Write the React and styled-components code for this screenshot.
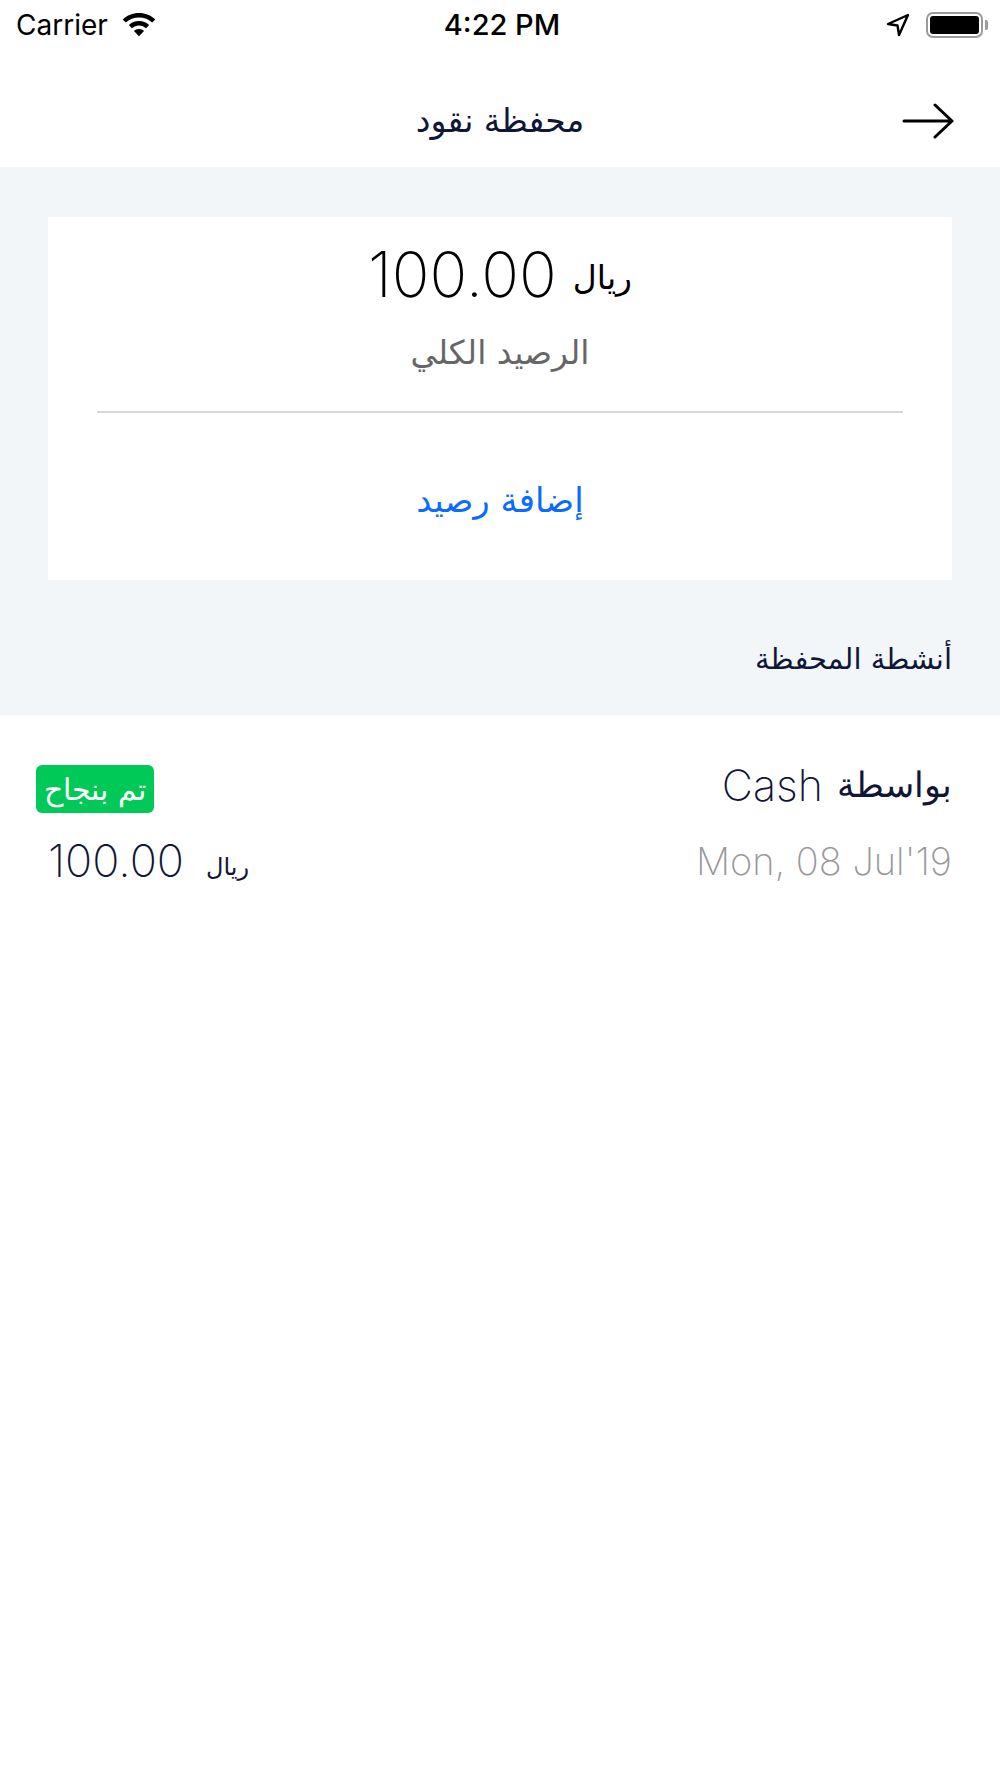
import React from "react";
import styled, { createGlobalStyle } from "styled-components";

const GlobalStyle = createGlobalStyle`
  html, body {
    margin: 0;
    padding: 0;
    background: #fff;
    font-family: "Inter", "DejaVu Sans", sans-serif;
  }
`;

const Page = styled.div`
  width: 1000px;
  height: 1778px;
  background: #fff;
  display: flex;
  flex-direction: column;
`;

const StatusBar = styled.div`
  height: 48px;
  padding: 2px 12px 0 16px;
  box-sizing: border-box;
  display: grid;
  grid-template-columns: 1fr auto 1fr;
  align-items: center;
  color: #000;
`;

const StatusLeft = styled.div`
  display: flex;
  align-items: center;
  gap: 14px;
  font-size: 28px;
  font-weight: 400;
  line-height: 46px;
`;

const StatusTime = styled.div`
  font-size: 29px;
  font-weight: 500;
  line-height: 46px;
`;

const StatusRight = styled.div`
  display: flex;
  align-items: center;
  justify-content: flex-end;
  gap: 16px;
`;

const Battery = styled.div`
  position: relative;
  width: 57px;
  height: 26px;
  box-sizing: border-box;
  border: 2px solid #9b9b9b;
  border-radius: 7px;
  padding: 2px;
  margin-right: 5px;

  &::before {
    content: "";
    display: block;
    height: 100%;
    background: #000;
    border-radius: 3px;
  }

  &::after {
    content: "";
    position: absolute;
    right: -7px;
    top: 6px;
    width: 3px;
    height: 10px;
    background: #9b9b9b;
    border-radius: 0 2px 2px 0;
  }
`;

const NavBar = styled.div`
  position: relative;
  height: 119px;
  box-sizing: border-box;
  padding-top: 26px;
  display: flex;
  align-items: center;
  justify-content: center;
`;

const NavTitle = styled.h1`
  margin: 0;
  font-family: "DejaVu Sans", sans-serif;
  font-size: 33px;
  font-weight: 400;
  line-height: 40px;
  color: #0f1638;
`;

const BackButton = styled.div`
  position: absolute;
  right: 46px;
  top: 55px;
  display: flex;
`;

const Content = styled.div`
  background: #f3f6f9;
  padding: 50px 48px 0;
`;

const BalanceCard = styled.div`
  height: 363px;
  box-sizing: border-box;
  background: #fff;
  padding: 0 49px;
  display: flex;
  flex-direction: column;
  align-items: center;
`;

const BalanceRow = styled.div`
  margin-top: 27px;
  display: flex;
  align-items: center;
  gap: 16px;
  height: 60px;
`;

const Amount = styled.span`
  font-size: ${(p) => p.$size}px;
  font-weight: 250;
  color: ${(p) => p.$color};
`;

const Currency = styled.span`
  font-family: "DejaVu Sans", sans-serif;
  font-size: ${(p) => p.$size}px;
  color: ${(p) => p.$color};
  position: relative;
  top: ${(p) => p.$drop}px;
`;

const BalanceLabel = styled.div`
  margin-top: 29px;
  font-family: "DejaVu Sans", sans-serif;
  font-size: 33px;
  line-height: 40px;
  color: #666;
`;

const Divider = styled.div`
  align-self: stretch;
  height: 2px;
  margin-top: 38px;
  background: #d8d8d8;
`;

const AddBalance = styled.div`
  margin-top: 67px;
  font-family: "DejaVu Sans", sans-serif;
  font-size: 34px;
  line-height: 40px;
  color: #0a6cff;
`;

const SectionTitle = styled.div`
  height: 135px;
  box-sizing: border-box;
  padding-top: 62px;
  text-align: right;
  font-family: "DejaVu Sans", sans-serif;
  font-size: 29px;
  color: #0f1638;
`;

const Activity = styled.div`
  padding: 50px 48px 0 36px;
  display: flex;
  flex-direction: column;
  gap: 20px;
`;

const ActivityRow = styled.div`
  display: flex;
  align-items: center;
  justify-content: space-between;
  padding-left: ${(p) => p.$inset || 0}px;
`;

const StatusBadge = styled.div`
  width: 118px;
  height: 48px;
  background: #00c957;
  border-radius: 6px;
  color: #fff;
  display: flex;
  align-items: center;
  justify-content: center;
  font-family: "DejaVu Sans", sans-serif;
  font-size: 30px;
  font-weight: 300;
  white-space: nowrap;
`;

const Method = styled.div`
  display: flex;
  align-items: center;
  gap: 14px;
  margin-top: -8px;
  font-size: 43px;
  font-weight: 250;
  line-height: 48px;
  color: #0f1638;
`;

const MethodArabic = styled.span`
  font-family: "DejaVu Sans", sans-serif;
  font-size: 35px;
`;

const PriceGroup = styled.div`
  display: flex;
  align-items: center;
  gap: 22px;
`;

const DateText = styled.div`
  font-size: 38px;
  font-weight: 250;
  color: #989898;
`;

function App() {
  return (
    <Page>
      <GlobalStyle />
      <StatusBar>
        <StatusLeft>
          Carrier
          <svg width="34" height="24" viewBox="0 0 34 24" fill="#000">
            <path d="M17 0C10.7 0 5 2.4.8 6.4l3 3.2C7.2 6.3 11.9 4.4 17 4.4s9.800 1.900 13.200 5.200l3-3.200C29 2.400 23.300 0 17 0z" />
            <path d="M17 8c-3.900 0-7.400 1.500-10.100 4l3 3.200c1.900-1.700 4.400-2.800 7.100-2.800s5.200 1.100 7.100 2.800l3-3.200C24.400 9.500 20.900 8 17 8z" />
            <path d="M17 16c-1.900 0-3.700.7-5 1.900l5 5.300 5-5.300c-1.300-1.200-3.100-1.900-5-1.900z" />
          </svg>
        </StatusLeft>
        <StatusTime>4:22 PM</StatusTime>
        <StatusRight>
          <svg width="24" height="24" viewBox="0 0 24 24" fill="none" stroke="#000" strokeWidth="2.400" strokeLinejoin="round">
            <path d="M22 2 2 11l9.500 1.500L13 22z" />
          </svg>
          <Battery />
        </StatusRight>
      </StatusBar>
      <NavBar>
        <NavTitle>محفظة نقود</NavTitle>
        <BackButton>
          <svg width="52" height="36" viewBox="0 0 52 36" fill="none" stroke="#000" strokeWidth="3" strokeLinecap="round" strokeLinejoin="round">
            <path d="M2 18h48M33 2l17 16-17 16" />
          </svg>
        </BackButton>
      </NavBar>
      <Content>
        <BalanceCard>
          <BalanceRow>
            <Amount $size={62.500} $color="#000">100.00</Amount>
            <Currency $size={33} $drop={3} $color="#000">ريال</Currency>
          </BalanceRow>
          <BalanceLabel>الرصيد الكلي</BalanceLabel>
          <Divider />
          <AddBalance>إضافة رصيد</AddBalance>
        </BalanceCard>
        <SectionTitle>أنشطة المحفظة</SectionTitle>
      </Content>
      <Activity>
        <ActivityRow>
          <StatusBadge>تم بنجاح</StatusBadge>
          <Method>
            Cash
            <MethodArabic>بواسطة</MethodArabic>
          </Method>
        </ActivityRow>
        <ActivityRow $inset={12}>
          <PriceGroup>
            <Amount $size={45} $color="#0f1638">100.00</Amount>
            <Currency $size={24} $drop={6} $color="#0f1638">ريال</Currency>
          </PriceGroup>
          <DateText>Mon, 08 Jul'19</DateText>
        </ActivityRow>
      </Activity>
    </Page>
  );
}

export default App;
